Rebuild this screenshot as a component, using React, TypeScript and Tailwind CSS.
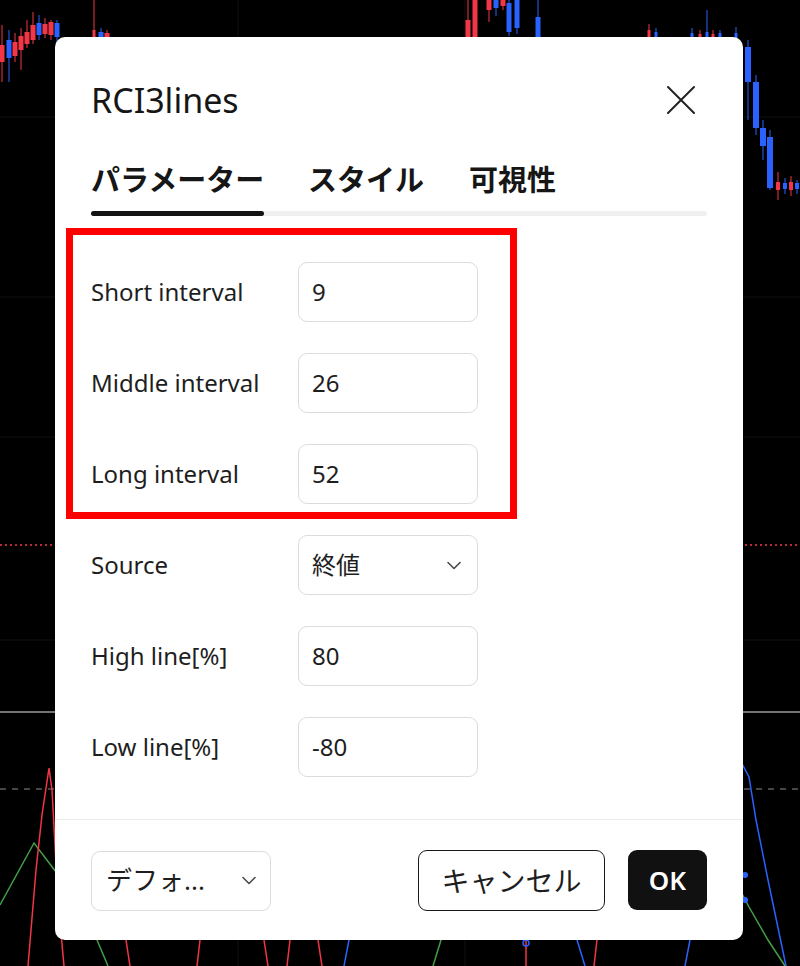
import React from 'react';

const RED = '#f23645';
const BLUE = '#2962ff';
const GREEN = '#43a047';

type Candle = { x: number; top: number; bottom: number; hi: number; lo: number; up: boolean; w?: number };

const CANDLES: Candle[] = [
  // top-left cluster
  { x: 2, top: 45, bottom: 62, hi: 25, lo: 82, up: false },
  { x: 9, top: 40, bottom: 58, hi: 30, lo: 82, up: true },
  { x: 15, top: 42, bottom: 56, hi: 33, lo: 62, up: false },
  { x: 21, top: 36, bottom: 50, hi: 28, lo: 70, up: false },
  { x: 27, top: 32, bottom: 44, hi: 20, lo: 48, up: false },
  { x: 33, top: 25, bottom: 40, hi: 12, lo: 44, up: false },
  { x: 39, top: 23, bottom: 35, hi: 15, lo: 40, up: true },
  { x: 45, top: 24, bottom: 34, hi: 18, lo: 38, up: false },
  { x: 51, top: 22, bottom: 35, hi: 20, lo: 40, up: false },
  { x: 57, top: 23, bottom: 37, hi: 20, lo: 44, up: true },
  { x: 94, top: 30, bottom: 38, hi: 0, lo: 40, up: false, w: 3 },
  { x: 101, top: 32, bottom: 38, hi: 28, lo: 40, up: true },
  { x: 107, top: 33, bottom: 38, hi: 30, lo: 40, up: false },
  // top-middle cluster
  { x: 468, top: 20, bottom: 40, hi: 0, lo: 40, up: false },
  { x: 475, top: 0, bottom: 40, hi: 0, lo: 40, up: false },
  { x: 489, top: 0, bottom: 10, hi: 0, lo: 22, up: false },
  { x: 496, top: 0, bottom: 8, hi: 0, lo: 16, up: true },
  { x: 503, top: 0, bottom: 6, hi: 0, lo: 10, up: false },
  { x: 509, top: 3, bottom: 32, hi: 0, lo: 36, up: true },
  { x: 517, top: 0, bottom: 28, hi: 0, lo: 34, up: true },
  { x: 538, top: 17, bottom: 40, hi: 0, lo: 40, up: true },
  // top-right cluster
  { x: 649, top: 30, bottom: 40, hi: 24, lo: 40, up: false, w: 3 },
  { x: 656, top: 32, bottom: 40, hi: 28, lo: 40, up: true, w: 3 },
  { x: 692, top: 33, bottom: 40, hi: 28, lo: 40, up: true, w: 3 },
  { x: 700, top: 34, bottom: 40, hi: 30, lo: 40, up: false, w: 3 },
  { x: 707, top: 32, bottom: 40, hi: 10, lo: 40, up: true, w: 3 },
  { x: 713, top: 34, bottom: 40, hi: 30, lo: 40, up: false, w: 3 },
  { x: 720, top: 33, bottom: 40, hi: 30, lo: 40, up: true, w: 3 },
  { x: 736, top: 33, bottom: 40, hi: 27, lo: 40, up: true, w: 3 },
  // right-side drop
  { x: 748, top: 47, bottom: 82, hi: 40, lo: 120, up: true, w: 6 },
  { x: 756, top: 82, bottom: 128, hi: 75, lo: 135, up: true, w: 6 },
  { x: 763, top: 128, bottom: 146, hi: 120, lo: 160, up: true, w: 6 },
  { x: 770, top: 137, bottom: 188, hi: 130, lo: 190, up: true, w: 6 },
  { x: 778, top: 182, bottom: 190, hi: 172, lo: 200, up: false, w: 4 },
  { x: 785, top: 183, bottom: 189, hi: 178, lo: 194, up: true, w: 4 },
  { x: 791, top: 182, bottom: 190, hi: 176, lo: 196, up: false, w: 4 },
  { x: 797, top: 183, bottom: 189, hi: 180, lo: 194, up: true, w: 4 },
];

const ChartBackdrop: React.FC = () => (
  <svg className="absolute inset-0" width={800} height={966} viewBox="0 0 800 966">
    {[117, 297, 437, 640].map((y) => (
      <line key={`h${y}`} x1={0} x2={800} y1={y} y2={y} stroke="#111111" strokeWidth={1} />
    ))}
    {[238, 465].map((x) => (
      <line key={`v${x}`} x1={x} x2={x} y1={0} y2={966} stroke="#101010" strokeWidth={1} />
    ))}
    {CANDLES.map((c, i) => {
      const color = c.up ? BLUE : RED;
      const w = c.w ?? 5;
      return (
        <g key={i}>
          <line x1={c.x} x2={c.x} y1={c.hi} y2={c.lo} stroke={color} strokeWidth={1} />
          <rect x={c.x - w / 2} y={c.top} width={w} height={Math.max(1, c.bottom - c.top)} fill={color} />
        </g>
      );
    })}
    <line x1={0} x2={800} y1={545} y2={545} stroke={RED} strokeWidth={1.5} strokeDasharray="2 3" />
    <line x1={0} x2={800} y1={712} y2={712} stroke="#9a9a9a" strokeWidth={1.5} />
    <line x1={0} x2={800} y1={789} y2={789} stroke="#8a8a8a" strokeWidth={1} strokeDasharray="6 6" />
    <polyline points="0,905 34,843 56,872 70,900" fill="none" stroke={GREEN} strokeWidth={1.5} />
    <polyline points="28,966 36,870 42,815 49,768 52,790 58,900 64,966" fill="none" stroke={RED} strokeWidth={1.5} />
    <polyline points="97,940 108,966" fill="none" stroke={GREEN} strokeWidth={1.5} />
    {[126, 200, 264, 290, 318, 597].map((x, i) => (
      <line key={`r${x}`} x1={x} x2={x + (i % 2 === 0 ? 4 : -3)} y1={940} y2={966} stroke={RED} strokeWidth={1.5} />
    ))}
    <line x1={526} x2={526} y1={940} y2={966} stroke={RED} strokeWidth={1.5} />
    <circle cx={526} cy={943} r={3} fill="none" stroke={BLUE} strokeWidth={1.5} />
    <line x1={433} x2={441} y1={966} y2={940} stroke={GREEN} strokeWidth={1.5} />
    <line x1={344} x2={349} y1={966} y2={940} stroke={BLUE} strokeWidth={1.5} />
    <line x1={577} x2={585} y1={940} y2={966} stroke={BLUE} strokeWidth={1.5} />
    <line x1={685} x2={690} y1={966} y2={940} stroke={BLUE} strokeWidth={1.5} />
    <polyline points="740,760 749,777 756,820 768,880 786,966" fill="none" stroke={BLUE} strokeWidth={1.5} />
    <polyline points="740,890 749,907 768,940 785,966" fill="none" stroke={GREEN} strokeWidth={1.5} />
    <circle cx={745} cy={875} r={3} fill={BLUE} />
    <circle cx={745} cy={900} r={3} fill={BLUE} />
  </svg>
);

const Chevron: React.FC = () => (
  <svg width="14" height="9" viewBox="0 0 14 9" fill="none">
    <path d="M1 1.5 L7 7.5 L13 1.5" stroke="#4a4a4a" strokeWidth="1.6" strokeLinecap="round" strokeLinejoin="round" />
  </svg>
);

const Field: React.FC<{ label: string; value: string; select?: boolean }> = ({ label, value, select }) => (
  <div className="flex items-center h-[60px]">
    <div className="w-[207px] text-[24px] text-[#1e1e1e]">{label}</div>
    <div className="w-[180px] h-[60px] rounded-[9px] border border-[#dcdcdc] flex items-center justify-between pl-[13px] pr-[16px] text-[24px] text-[#1e1e1e]">
      <span>{value}</span>
      {select && <Chevron />}
    </div>
  </div>
);

const App: React.FC = () => {
  return (
    <div
      className="relative w-[800px] h-[966px] bg-black overflow-hidden"
      style={{ fontFamily: '"Noto Sans", "Noto Sans CJK JP", sans-serif' }}
    >
      <ChartBackdrop />

      <div className="relative ml-[55px] mt-[37px] w-[688px] h-[903px] bg-white rounded-[10px] flex flex-col">
        <header className="flex items-center justify-between pl-[36px] pr-[47px] pt-[45px] h-[81px]">
          <h1 className="text-[34px] leading-[36px] text-[#161616]">RCI3lines</h1>
          <svg width="30" height="30" viewBox="0 0 30 30">
            <path d="M2 2 L28 28 M28 2 L2 28" stroke="#222" strokeWidth="2" strokeLinecap="round" />
          </svg>
        </header>

        <nav className="px-[36px] mt-[44px]">
          <div className="flex text-[29px] leading-[36px] font-bold text-[#161616]">
            <span className="w-[217px]">パラメーター</span>
            <span className="w-[161px]">スタイル</span>
            <span>可視性</span>
          </div>
          <div className="mt-[13px] h-[5px] rounded-full bg-[#f0f0f0]">
            <div className="w-[173px] h-[5px] rounded-full bg-[#131313]" />
          </div>
        </nav>

        <section className="ml-[11px] mt-[12px] w-[451px] h-[291px] border-[7px] border-[#ff0000] pl-[18px] pt-[27px] flex flex-col gap-[31px]">
          <Field label="Short interval" value="9" />
          <Field label="Middle interval" value="26" />
          <Field label="Long interval" value="52" />
        </section>

        <section className="pl-[36px] mt-[16px] flex flex-col gap-[31px]">
          <Field label="Source" value="終値" select />
          <Field label="High line[%]" value="80" />
          <Field label="Low line[%]" value="-80" />
        </section>

        <footer className="mt-auto border-t border-[#ebebeb] px-[36px] pt-[30px] pb-[29px] flex items-center">
          <div className="w-[180px] h-[60px] rounded-[9px] border border-[#dcdcdc] flex items-center justify-between pl-[14px] pr-[14px] text-[26px] text-[#1e1e1e]">
            <span>デフォ...</span>
            <Chevron />
          </div>
          <div className="ml-auto flex gap-[23px]">
            <button className="w-[187px] h-[61px] rounded-[9px] border-[1.5px] border-[#1a1a1a] text-[28px] text-[#1e1e1e] bg-white">
              キャンセル
            </button>
            <button className="w-[79px] h-[60px] rounded-[9px] bg-[#111111] text-white text-[26px] font-semibold">
              OK
            </button>
          </div>
        </footer>
      </div>
    </div>
  );
};

export default App;
